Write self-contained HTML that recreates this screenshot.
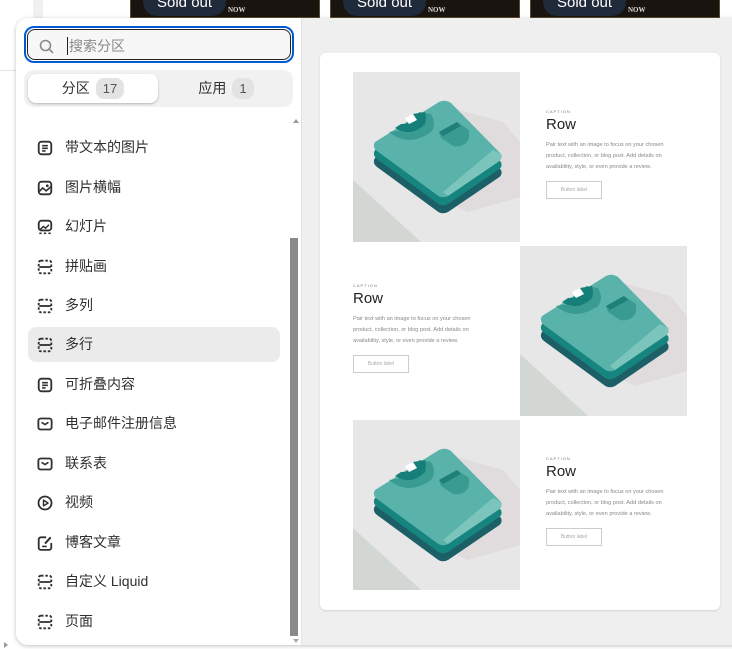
<!DOCTYPE html>
<html><head><meta charset="utf-8">
<style>
*{box-sizing:border-box;margin:0;padding:0}
body{width:732px;height:649px;overflow:hidden;background:#fff;font-family:"Liberation Sans","Noto Sans CJK SC",sans-serif;position:relative}
.abs{position:absolute}
.img{top:0;height:18px;background:#1a1410;border:1px solid #5b4a30;border-top:none}
.pill{top:-12px;height:28px;border-radius:14px;background:#1f2a3a;color:#fff;font-size:15px;line-height:30px;padding:0 14px}
.now{top:6px;font-size:7px;color:#ddd;font-weight:bold;font-family:"Liberation Serif",serif}
.pop{left:16px;top:18px;width:730px;height:627px;border-radius:12px;background:#efefef;box-shadow:0 1px 4px rgba(0,0,0,.25);overflow:hidden}
.left{left:0;top:0;width:286px;height:627px;background:#fff;border-right:1px solid #e3e3e3}
.search{left:8px;top:8px;width:270px;height:37px;border:2px solid #005bd3;border-radius:10px;padding:1px}
.search .in{width:100%;height:100%;border:1px solid #222;border-radius:8px;background:#f7f7f7;position:relative}
.tabs{left:8px;top:52px;width:269px;height:37px;background:#f1f1f1;border-radius:10px}
.tab{top:4px;height:29px;border-radius:8px;font-size:14px;color:#303030;line-height:29px;text-align:center}
.badge{display:inline-block;background:#e3e3e3;border-radius:8px;padding:0 7px;height:21px;line-height:21px;font-size:13px;margin-left:6px;color:#555}
.item{left:12px;width:252px;height:35px;border-radius:8px;font-size:14px;color:#303030;line-height:35px;padding-left:37px}
.item svg{position:absolute;left:9px;top:10px}
.sel{background:#ebebeb}
.card{left:304px;top:35px;width:400px;height:557px;background:#fff;border-radius:6px;box-shadow:0 1px 2px rgba(0,0,0,.12)}
.txt{width:135px}
.cap{font-size:4px;letter-spacing:1px;color:#777}
.h{font-size:15px;color:#222;margin-top:2px;font-weight:300}
.p{font-size:5.6px;color:#888;line-height:11px;margin-top:7px;width:132px}
.btn{margin-top:8px;width:56px;height:18px;border:1px solid #ccc;font-size:5px;color:#aaa;text-align:center;line-height:17px}
</style></head><body>
<svg width="0" height="0" style="position:absolute">
<defs>
<symbol id="shirt" viewBox="0 0 167 170">
<rect width="167" height="170" fill="#e6e7e6"/>
<polygon points="0,108 0,170 68,170" fill="#d3d7d3"/>
<polygon points="100,36 150,50 167,70 167,125 115,140 85,125" fill="#e0dcdd"/>
<path d="M22,86 L86,46 Q92,43 98,47 L148,98 Q150,103 145,106 L95,140 Q89,143 84,139 L24,95 Q19,91 22,86Z" fill="#1c5f66"/>
<path d="M22,78 L86,38 Q92,35 98,39 L148,90 Q150,95 145,98 L95,132 Q89,135 84,131 L24,87 Q19,83 22,78Z" fill="#17857f"/>
<path d="M22,70 L86,30 Q92,27 98,31 L148,82 Q150,87 145,90 L95,124 Q89,127 84,123 L24,79 Q19,75 22,70Z" fill="#5ab3aa"/>
<path d="M140,78 L148,82 Q150,87 145,90 L95,124 L90,120 Z" fill="#7cc5bc"/>
<path d="M36,60 Q55,76 78,60 Q84,52 78,42 L66,40 Q64,56 50,58 Z" fill="#3a9b93"/>
<path d="M42,56 Q58,66 72,52 Q74,46 72,40 L60,42 Q60,52 48,52 Z" fill="#177f79"/>
<polygon points="52,46 60,42 64,48 56,52" fill="#fff"/>
<path d="M86,60 L104,50 L116,58 L116,66 Q112,76 100,74 L88,66 Z" fill="#3a9b93"/>
<polygon points="86,60 104,50 108,54 90,64" fill="#1f7f79"/>
</symbol>
<symbol id="dash" viewBox="0 0 14 14"><rect x="1.5" y="1.5" width="11" height="11" rx="2" fill="none" stroke="#303030" stroke-width="1.6" stroke-dasharray="2.2 1.6"/><line x1="2" y1="7" x2="12" y2="7" stroke="#303030" stroke-width="1.6"/></symbol>
<symbol id="doc" viewBox="0 0 14 14"><rect x="1.5" y="1.5" width="11" height="11" rx="2.5" fill="none" stroke="#303030" stroke-width="1.6"/><path d="M4.5 5h5M4.5 7.3h5M4.5 9.6h3" stroke="#303030" stroke-width="1.4"/></symbol>
<symbol id="mail" viewBox="0 0 14 14"><rect x="1.2" y="2.2" width="11.6" height="9.6" rx="2" fill="none" stroke="#303030" stroke-width="1.6"/><path d="M4 5.5l3 2 3-2" fill="none" stroke="#303030" stroke-width="1.4"/></symbol>
</defs></svg>

<div class="abs" style="left:33px;top:0;width:10px;height:70px;background:#f1f1f1"></div>
<div class="abs" style="left:0;top:70px;width:16px;height:1px;background:#e3e3e3"></div>
<div class="abs img" style="left:130px;width:190px"></div>
<div class="abs img" style="left:330px;width:190px"></div>
<div class="abs img" style="left:530px;width:190px"></div>
<div class="abs pill" style="left:143px">Sold out</div>
<div class="abs pill" style="left:343px">Sold out</div>
<div class="abs pill" style="left:543px">Sold out</div>
<div class="abs now" style="left:228px">NOW</div>
<div class="abs now" style="left:428px">NOW</div>
<div class="abs now" style="left:628px">NOW</div>

<div class="abs pop">
 <div class="abs left">
  <div class="abs search"><div class="in">
   <svg class="abs" style="left:11px;top:9px" width="16" height="16" viewBox="0 0 16 16"><circle cx="6.5" cy="6.5" r="5" fill="none" stroke="#8a8a8a" stroke-width="1.6"/><line x1="10.2" y1="10.2" x2="14" y2="14" stroke="#8a8a8a" stroke-width="1.6"/></svg>
   <div class="abs" style="left:39px;top:7px;width:1px;height:18px;background:#222"></div>
   <div class="abs" style="left:41px;top:6px;font-size:14px;color:#8a8a8a">搜索分区</div>
  </div></div>
  <div class="abs tabs">
   <div class="abs tab" style="left:4px;width:130px;background:#fff;box-shadow:0 1px 2px rgba(0,0,0,.25)">分区<span class="badge">17</span></div>
   <div class="abs tab" style="left:138px;width:128px">应用<span class="badge">1</span></div>
  </div>
  <div class="abs" style="left:277px;top:101px;width:0;height:0;border:3px solid transparent;border-bottom:4px solid #999;border-top:none"></div>
  <div class="abs" style="left:274px;top:220px;width:8px;height:398px;background:#8a8a8a"></div>
  <div class="abs" style="left:277px;top:621px;width:0;height:0;border:3px solid transparent;border-top:4px solid #aaa;border-bottom:none"></div>

  <div class="abs item" style="top:112px"><svg width="16" height="16"><use href="#doc"/></svg>带文本的图片</div>
  <div class="abs item" style="top:152px"><svg width="16" height="16" viewBox="0 0 14 14"><rect x="1.5" y="1.5" width="11" height="11" rx="2.5" fill="none" stroke="#303030" stroke-width="1.6"/><path d="M2 10l3-3 3 2.5 4-3.5" fill="none" stroke="#303030" stroke-width="1.4"/><circle cx="9" cy="5" r="1.2" fill="#303030"/></svg>图片横幅</div>
  <div class="abs item" style="top:191px"><svg width="16" height="16" viewBox="0 0 14 14"><rect x="1.5" y="1.5" width="11" height="8.5" rx="2.5" fill="none" stroke="#303030" stroke-width="1.6"/><path d="M3 9l2.5-2.5 2 1.5 3-3" fill="none" stroke="#303030" stroke-width="1.3"/><path d="M2 12.5h2M6 12.5h2M10 12.5h2" stroke="#303030" stroke-width="1.4"/></svg>幻灯片</div>
  <div class="abs item" style="top:231px"><svg width="16" height="16"><use href="#dash"/></svg>拼贴画</div>
  <div class="abs item" style="top:270px"><svg width="16" height="16"><use href="#dash"/></svg>多列</div>
  <div class="abs item sel" style="top:309px"><svg width="16" height="16"><use href="#dash"/></svg>多行</div>
  <div class="abs item" style="top:349px"><svg width="16" height="16"><use href="#doc"/></svg>可折叠内容</div>
  <div class="abs item" style="top:388px"><svg width="16" height="16"><use href="#mail"/></svg>电子邮件注册信息</div>
  <div class="abs item" style="top:428px"><svg width="16" height="16"><use href="#mail"/></svg>联系表</div>
  <div class="abs item" style="top:467px"><svg width="16" height="16" viewBox="0 0 14 14"><circle cx="7" cy="7" r="5.7" fill="none" stroke="#303030" stroke-width="1.6"/><path d="M5.7 4.5v5l4-2.5z" fill="none" stroke="#303030" stroke-width="1.3" stroke-linejoin="round"/></svg>视频</div>
  <div class="abs item" style="top:507px"><svg width="16" height="16" viewBox="0 0 14 14"><path d="M8 2H3.5a2 2 0 0 0-2 2v7a2 2 0 0 0 2 2h7a2 2 0 0 0 2-2V7" fill="none" stroke="#303030" stroke-width="1.6"/><path d="M7 7.5l5-5.5" stroke="#303030" stroke-width="1.8"/><path d="M4.5 10h4" stroke="#303030" stroke-width="1.4"/></svg>博客文章</div>
  <div class="abs item" style="top:546px"><svg width="16" height="16"><use href="#dash"/></svg>自定义 Liquid</div>
  <div class="abs item" style="top:586px"><svg width="16" height="16"><use href="#dash"/></svg>页面</div>
 </div>

 <div class="abs card">
  <svg class="abs" style="left:33px;top:19px" width="167" height="170"><use href="#shirt"/></svg>
  <div class="abs txt" style="left:226px;top:56px"><div class="cap">CAPTION</div><div class="h">Row</div><div class="p">Pair text with an image to focus on your chosen product, collection, or blog post. Add details on availability, style, or even provide a review.</div><div class="btn">Button label</div></div>
  <svg class="abs" style="left:200px;top:193px" width="167" height="170"><use href="#shirt"/></svg>
  <div class="abs txt" style="left:33px;top:230px"><div class="cap">CAPTION</div><div class="h">Row</div><div class="p">Pair text with an image to focus on your chosen product, collection, or blog post. Add details on availability, style, or even provide a review.</div><div class="btn">Button label</div></div>
  <svg class="abs" style="left:33px;top:367px" width="167" height="170"><use href="#shirt"/></svg>
  <div class="abs txt" style="left:226px;top:403px"><div class="cap">CAPTION</div><div class="h">Row</div><div class="p">Pair text with an image to focus on your chosen product, collection, or blog post. Add details on availability, style, or even provide a review.</div><div class="btn">Button label</div></div>
 </div>
</div>
<div class="abs" style="left:4px;top:642px;width:0;height:0;border:3px solid transparent;border-left:4px solid #999;border-right:none"></div>
</body></html>
